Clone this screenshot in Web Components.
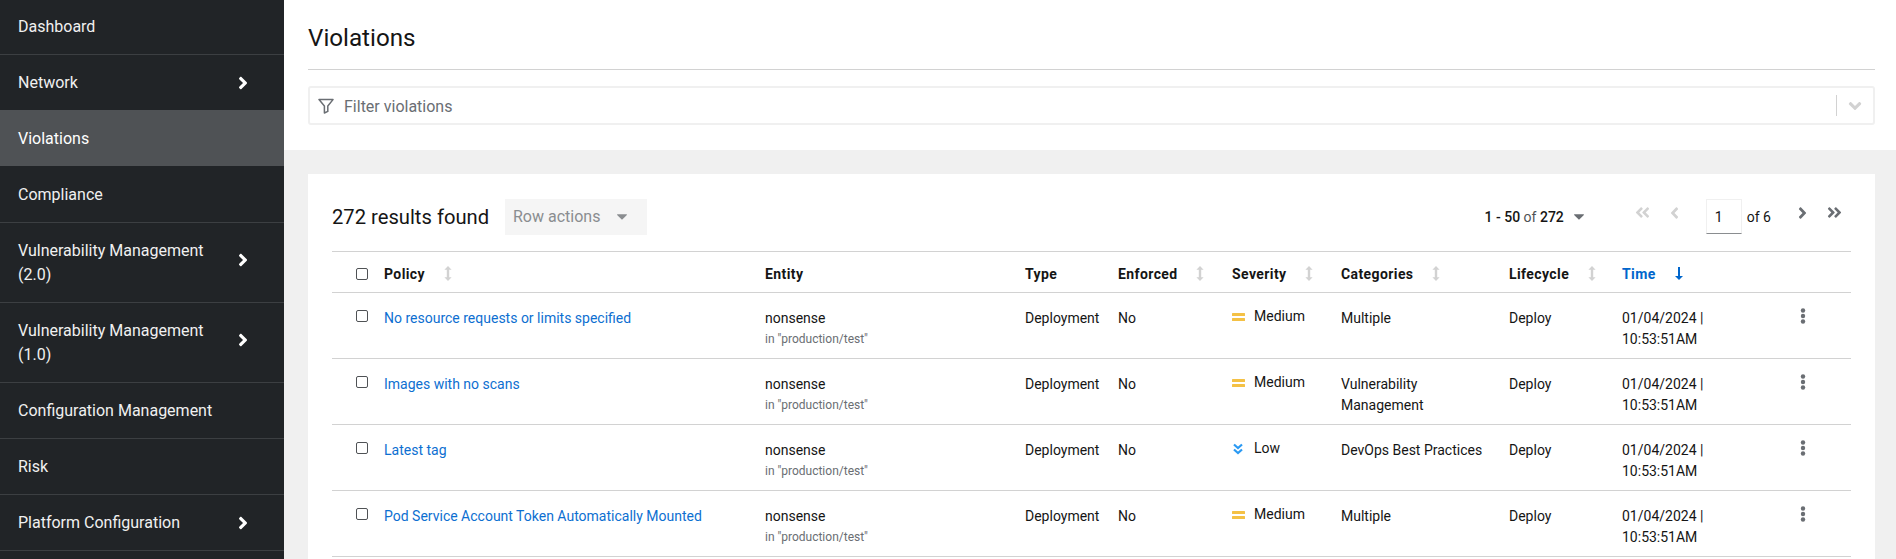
<!doctype html>
<html><head><meta charset="utf-8"><title>Violations</title>
<style>
html,body{margin:0;height:100%;overflow:hidden;background:#f0f0f0}
body{font-family:"Roboto","Liberation Sans",sans-serif;font-size:14px;color:#151515}
app-shell{height:100vh}
</style></head><body>
<app-shell>
  <side-nav slot="nav">
    <nav-item style="margin-top:-1px">Dashboard</nav-item>
    <nav-item expandable style="min-height:55px;border-bottom:0">Network</nav-item>
    <nav-item current>Violations</nav-item>
    <nav-item style="min-height:57px">Compliance</nav-item>
    <nav-item expandable raised>Vulnerability Management (2.0)</nav-item>
    <nav-item expandable raised>Vulnerability Management (1.0)</nav-item>
    <nav-item>Configuration Management</nav-item>
    <nav-item>Risk</nav-item>
    <nav-item expandable>Platform Configuration</nav-item>
  </side-nav>
  <page-header title="Violations" placeholder="Filter violations"></page-header>
  <results-card>
    <table-toolbar></table-toolbar>
    <table-head></table-head>
    <violation-row policy="No resource requests or limits specified" severity="Medium" categories="Multiple"></violation-row>
    <violation-row policy="Images with no scans" severity="Medium" categories="Vulnerability Management"></violation-row>
    <violation-row policy="Latest tag" severity="Low" categories="DevOps Best Practices"></violation-row>
    <violation-row policy="Pod Service Account Token Automatically Mounted" severity="Medium" categories="Multiple"></violation-row>
  </results-card>
</app-shell>
<script>
const ANGLE='M224.3 273l-136 136c-9.4 9.4-24.6 9.4-33.9 0l-22.6-22.6c-9.4-9.4-9.4-24.6 0-33.9l96.4-96.4-96.4-96.4c-9.4-9.4-9.4-24.6 0-33.9L54.3 103c9.4-9.4 24.6-9.4 33.9 0l136 136c9.5 9.4 9.5 24.6.1 34z';
const angle=(w,h,c,style='')=>`<svg width="${w}" height="${h}" viewBox="0 0 256 512" style="${style}" fill="${c}"><path d="${ANGLE}"/></svg>`;
const dbl=(w,h,c,flip)=>`<svg width="${w}" height="${h}" viewBox="0 0 448 512" fill="${c}" style="${flip?'transform:scaleX(-1);':''}"><path d="${ANGLE}"/><path transform="translate(192 0)" d="${ANGLE}"/></svg>`;
const caret=(c)=>`<svg width="10" height="6" viewBox="0 0 10 6" fill="${c}"><path d="M.4.3h9.2c.3 0 .5.4.3.6L5.3 5.6c-.2.2-.4.2-.6 0L.1.9C-.1.7.1.3.4.3z"/></svg>`;
const sortIcon=`<svg width="8" height="15" viewBox="0 0 8 15" fill="#d2d2d2"><path d="M4 0l3.6 3.8H5.2v7.4h2.4L4 15 .4 11.2h2.4V3.8H.4z"/></svg>`;
const kebab=`<svg width="6" height="16" viewBox="0 0 6 16" fill="#6a6e73"><circle cx="3" cy="2.5" r="2.2"/><circle cx="3" cy="8" r="2.2"/><circle cx="3" cy="13.5" r="2.2"/></svg>`;
const COLS='52px 381px 260px 93px 114px 109px 168px 113px 168px 1fr';

function def(name,render){
  customElements.define(name,class extends HTMLElement{
    connectedCallback(){ if(!this.shadowRoot){this.attachShadow({mode:'open'}).innerHTML=render(this);} }
  });
}
def('app-shell',()=>`<style>:host{display:grid;grid-template-columns:284px 1fr;grid-template-rows:150px 1fr;overflow:hidden}
 .n{grid-row:1/3} </style><div class="n"><slot name="nav"></slot></div><slot></slot>`);
def('side-nav',()=>`<style>:host{display:block;height:100vh;background:#212427;color:#fff;overflow:hidden}</style><slot></slot>`);
def('nav-item',e=>`<style>:host{display:flex;align-items:center;box-sizing:border-box;min-height:56px;padding:0 36px 0 18px;
 border-bottom:1px solid #3c3f42;font-size:16px;line-height:24px;color:#f0f0f0}
 :host([current]){background:#4f5255;border-bottom:0;color:#fff}
 .t{flex:1;max-width:200px;padding:16px 0 15px}.i{display:flex;margin-left:auto}
 :host([raised]) .i{margin-bottom:5px}</style>
 <span class="t"><slot></slot></span>${e.hasAttribute('expandable')?`<span class="i">${angle(10,20,'#fff')}</span>`:''}`);
def('page-header',e=>`<style>:host{display:block;background:#fff;padding:0 21px 0 24px;height:150px;box-sizing:border-box}
 h1{margin:0;font-weight:400;font-size:24.2px;line-height:36px;padding-top:20px;padding-bottom:13px;border-bottom:1px solid #d2d2d2;color:#151515}
 .f{margin-top:16px;height:39px;box-sizing:border-box;border:2px solid #f0f0f0;border-radius:3px;display:flex;align-items:center;padding:0 0 0 8px}
 .ph{color:#6a6e73;font-size:16px;margin-left:10px;flex:1;padding-top:2px}
 .sep{width:1px;height:21px;background:#d2d2d2;margin-right:13px}
 </style><h1>${e.getAttribute('title')}</h1><div class="f">
 <svg width="16" height="16" viewBox="0 0 16 16" fill="none" stroke="#6a6e73" stroke-width="1.5" stroke-linejoin="round"><path d="M1 1.6h14L9.8 8v5.4l-3.4 1.6V8z"/></svg>
 <span class="ph">${e.getAttribute('placeholder')}</span><span class="sep"></span>
 ${angle(10,20,'#d2d2d2','transform:rotate(90deg);margin-right:13px')}</div>`);
def('results-card',()=>`<style>:host{display:block;background:#fff;margin:24px 21px 0 24px;padding:0 24px;overflow:hidden}</style><slot></slot>`);
def('table-toolbar',()=>`<style>:host{display:flex;align-items:center;height:78px;box-sizing:border-box;padding-top:8px;border-bottom:1px solid #d2d2d2}
 .c{font-size:20.2px;font-weight:400;color:#151515;width:173px}
 .ra{width:142px;height:36px;box-sizing:border-box;background:#f5f5f5;color:#8a8d90;display:flex;align-items:center;justify-content:space-between;padding:0 20px 0 8px;font-size:16px}
 .pg{margin-left:auto;display:flex;align-items:center;font-size:14px;color:#151515;margin-right:9px}
 .pg b{font-weight:500}.pg i{font-style:normal;color:#4f5255}
 .cr{margin:0 51px 0 10px;display:flex}
 .n{display:flex;margin-top:-8px}
 .box{width:36px;height:35px;box-sizing:border-box;border:1px solid #f0f0f0;border-bottom-color:#8a8d90;padding:0 8px;display:flex;align-items:center;margin:0 5px 0 27px}
 .o{margin-right:27px}
 </style><span class="c">272 results found</span><span class="ra">Row actions ${caret('#8a8d90')}</span>
 <div class="pg"><span><b>1 - 50</b> <i>of</i> <b>272</b></span><span class="cr">${caret('#6a6e73')}</span>
 <span class="n">${dbl(15,17,'#d2d2d2',true)}</span><span class="n" style="margin-left:20px">${angle(9,18,'#d2d2d2','transform:scaleX(-1)')}</span>
 <span class="box">1</span><span class="o">of 6</span>
 <span class="n">${angle(9,18,'#6a6e73')}</span><span class="n" style="margin-left:20px">${dbl(15,17,'#6a6e73')}</span></div>`);
def('table-head',()=>{
 const h=(t,s,st='')=>`<div class="h" style="${st}"><span>${t}</span>${s}</div>`;
 const so='<span style="margin-left:18.5px;display:flex">'+sortIcon+'</span>';
 return `<style>:host{display:grid;grid-template-columns:${COLS};height:41px;box-sizing:border-box;padding-top:3px;border-bottom:1px solid #d2d2d2;font-weight:700;font-size:14px;letter-spacing:.4px;color:#151515}
 .h{display:flex;align-items:center}
 .cb{display:flex;align-items:center;padding-left:24px}.cb i{display:block;width:12px;height:12px;box-sizing:border-box;border:1px solid #4f5255;border-radius:2px;background:#fff}
 </style><div class="cb"><i></i></div>
 ${h('Policy',so)}${h('Entity','')}${h('Type','')}${h('Enforced',so)}${h('Severity',so)}${h('Categories',so)}${h('Lifecycle',so)}
 ${h('Time','<span style="margin-left:19px;display:flex"><svg width="8" height="13" viewBox="0 0 8 13" fill="#06c"><path d="M3 0h2v9h3l-4 4-4-4h3z"/></svg></span>','color:#06c')}
 <div></div>`});
def('violation-row',e=>{
 const sev=e.getAttribute('severity');
 const icon=sev==='Medium'
  ?`<svg width="13" height="8" viewBox="0 0 13 8" fill="#f4c145"><rect width="13" height="3" rx=".5"/><rect y="5" width="13" height="3" rx=".5"/></svg>`
  :`<svg width="12" height="12" viewBox="0 0 12 12" fill="none" stroke="#2b9af3" stroke-width="2.2"><path d="M2 1.5l4 3.6 4-3.6M2 6.5l4 3.6 4-3.6"/></svg>`;
 return `<style>:host{display:grid;grid-template-columns:${COLS};height:66px;box-sizing:border-box;border-bottom:1px solid #d2d2d2;font-size:14px;line-height:21px;color:#151515;overflow:hidden}
 .c{padding-top:15px;padding-right:8px}
 .cb{padding:17px 0 0 24px}.cb i{display:block;width:12px;height:12px;box-sizing:border-box;border:1px solid #4f5255;border-radius:2px;background:#fff}
 a{color:#0d6fd1;text-decoration:none}
 small{display:block;font-size:12px;color:#6a6e73;line-height:21px}
 .s{display:flex;align-items:center;padding-top:13px;height:21px}.s svg{margin-right:${sev==='Medium'?9:10}px}
 .k{padding:15px 0 0 10px}
 </style><div class="cb"><i></i></div>
 <div class="c"><a href="#">${e.getAttribute('policy')}</a></div>
 <div class="c">nonsense<small>in "production/test"</small></div>
 <div class="c">Deployment</div><div class="c">No</div>
 <div class="s">${icon}<span>${sev}</span></div>
 <div class="c">${e.getAttribute('categories')}</div>
 <div class="c">Deploy</div>
 <div class="c" style="padding-right:40px">01/04/2024 | 10:53:51AM</div>
 <div class="k">${kebab}</div>`});
</script>
</body></html>
